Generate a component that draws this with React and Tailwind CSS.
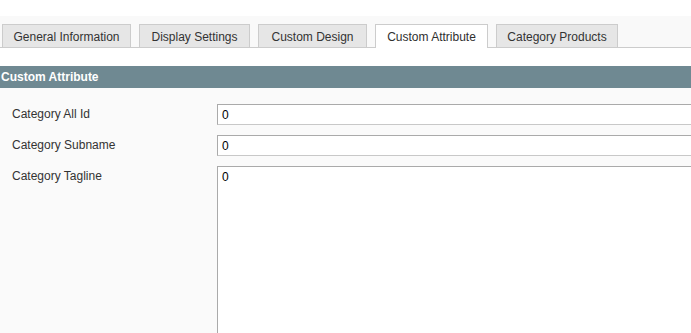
import React from "react";

const tabs = [
  { label: "General Information", w: "w-[129px]" },
  { label: "Display Settings", w: "w-[111px]" },
  { label: "Custom Design", w: "w-[109px]" },
  { label: "Custom Attribute", w: "w-[113px]", active: true },
  { label: "Category Products", w: "w-[122px]" },
];

export default function App() {
  return (
    <div className="w-[691px] h-[333px] overflow-hidden bg-white font-['Liberation_Sans',Arial,sans-serif] text-[12px] text-[#333]">
      <div className="h-[16px] bg-white" />
      <div className="h-[32px] bg-[#f9f9f9] border-b border-[#cccccc] flex items-end pl-[2px] gap-2">
        {tabs.map((t) =>
          t.active ? (
            <div
              key={t.label}
              className={`${t.w} shrink-0 h-[24px] -mb-px bg-white border border-b-0 border-[#cccccc] flex items-center justify-center pt-px text-[#2f2f2f]`}
            >
              {t.label}
            </div>
          ) : (
            <div
              key={t.label}
              className={`${t.w} shrink-0 h-[24px] -mb-px bg-[#e6e6e6] border border-[#cccccc] flex items-center justify-center pt-px text-[#333]`}
            >
              {t.label}
            </div>
          )
        )}
      </div>
      <div className="h-[18px] bg-white" />
      <div className="h-[22px] bg-[#6f8992] flex items-center pl-px text-white font-bold text-[12px]">
        Custom Attribute
      </div>
      <div className="bg-[#fafafa] h-[300px] pt-[16px] flex flex-col gap-[10px] overflow-hidden">
        <div className="flex items-center h-[21px]">
          <div className="w-[217px] shrink-0 pl-[12px] -mt-px">Category All Id</div>
          <div className="w-[500px] shrink-0 h-[21px] bg-white border border-[#aaaaaa] border-b-[#c8c8c8] pl-[4px] flex items-center text-[#000]">
            0
          </div>
        </div>
        <div className="flex items-center h-[21px]">
          <div className="w-[217px] shrink-0 pl-[12px] -mt-px">Category Subname</div>
          <div className="w-[500px] shrink-0 h-[21px] bg-white border border-[#aaaaaa] border-b-[#c8c8c8] pl-[4px] flex items-center text-[#000]">
            0
          </div>
        </div>
        <div className="flex items-start">
          <div className="w-[217px] shrink-0 pl-[12px] h-[20px] flex items-center">Category Tagline</div>
          <div className="w-[500px] shrink-0 h-[200px] bg-white border border-[#aaaaaa] pl-[4px] text-[#000]">
            <div className="h-[19px] flex items-center">0</div>
          </div>
        </div>
      </div>
    </div>
  );
}
